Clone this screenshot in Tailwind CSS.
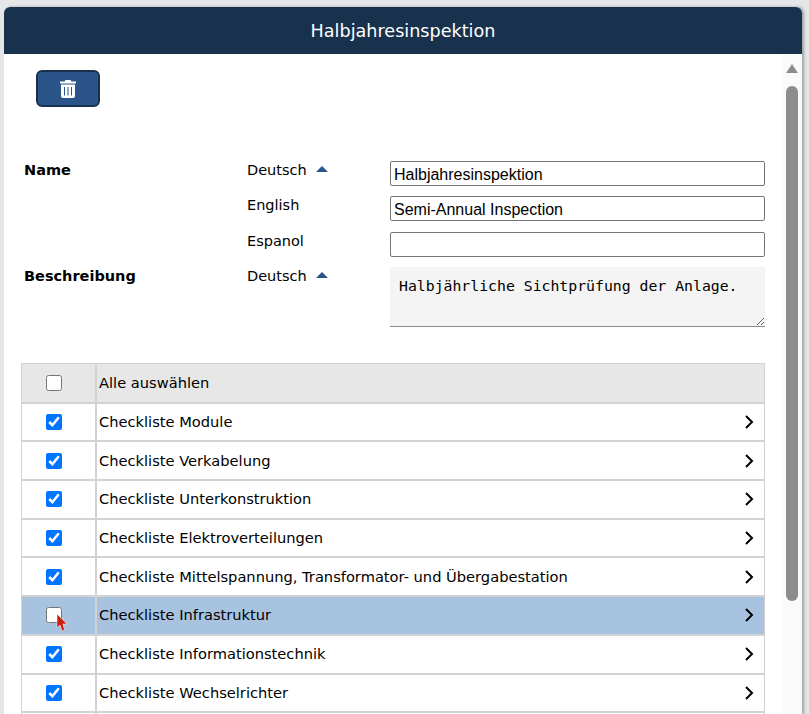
<!DOCTYPE html>
<html lang="en">
<head>
  <meta charset="UTF-8">
  <title>Halbjahresinspektion</title>
  <script src="https://cdn.jsdelivr.net/npm/@tailwindcss/browser@4"></script>
</head>
<body class="h-[714px] overflow-hidden bg-[#e4e6e8] font-['DejaVu_Sans',sans-serif] text-[14.500px] text-black">
  <div class="ml-[4px] mt-[7px] h-[707px] w-[798px] overflow-hidden rounded-t-[6px] bg-white shadow-[2px_0_3px_rgba(0,0,0,0.3)]">
    <div class="flex h-[47px] items-center justify-center pt-[2px] text-[17.600px] text-white bg-[#18324e]">Halbjahresinspektion</div>

    <div class="flex h-[660px]">
      <div class="w-[778px] overflow-hidden">
        <button class="ml-[32px] mt-[16px] flex h-[37px] w-[64px] items-center justify-center rounded-[6px] border-2 border-[#18324e] bg-[#2b5488]">
          <svg class="h-[18px] w-[16px]" viewBox="0 0 16 18" fill="#fff">
            <path d="M5.500 0h5l1 1.500h4.500v2h-16v-2h4.500z"/>
            <path fill-rule="evenodd" d="M1 4.500h14v11.500a2 2 0 0 1-2 2h-10a2 2 0 0 1-2-2zM4 7v8.500h1V7zM7.500 7v8.500h1V7zM11 7v8.500h1V7z"/>
          </svg>
        </button>

        <div class="ml-[20px] mt-[53px] w-[741px]">
          <div class="flex h-[35px]">
            <div class="w-[223px] font-bold">Name</div>
            <div class="flex w-[143px] items-start gap-[9px]">Deutsch <span class="mt-[6px] h-0 w-0 border-x-[6px] border-b-[6px] border-x-transparent border-b-[#2b5488]"></span></div>
            <input class="mt-[1px] h-[25px] w-[375px] rounded-[2px] border border-[#767676] px-[3px] pt-[2px] font-['Liberation_Sans',sans-serif] text-[16px]" value="Halbjahresinspektion">
          </div>
          <div class="flex h-[36px]">
            <div class="w-[223px]"></div>
            <div class="w-[143px]">English</div>
            <input class="mt-[1px] h-[25px] w-[375px] rounded-[2px] border border-[#767676] px-[3px] pt-[2px] font-['Liberation_Sans',sans-serif] text-[16px]" value="Semi-Annual Inspection">
          </div>
          <div class="flex h-[35px]">
            <div class="w-[223px]"></div>
            <div class="w-[143px]">Espanol</div>
            <input class="mt-[1px] h-[25px] w-[375px] rounded-[2px] border border-[#767676] px-[3px] pt-[2px] font-['Liberation_Sans',sans-serif] text-[16px]">
          </div>
          <div class="flex h-[97px]">
            <div class="w-[223px] font-bold">Beschreibung</div>
            <div class="flex w-[143px] items-start gap-[9px]">Deutsch <span class="mt-[6px] h-0 w-0 border-x-[6px] border-b-[6px] border-x-transparent border-b-[#2b5488]"></span></div>
            <textarea class="mt-[1px] h-[60px] w-[375px] border-b border-[#8a8a8a] bg-[#f4f4f4] px-[9px] pt-[8px] font-['DejaVu_Sans_Mono',monospace] text-[14.800px]">Halbjährliche Sichtprüfung der Anlage.</textarea>
          </div>

          <div class="-ml-[3px] w-[744px] border-x border-t border-[#d2d2d2] text-[14.650px]">
            <div class="flex h-[39.700px] border-b-2 border-[#d2d2d2] bg-[#e7e7e7] pt-[1px]">
              <div class="flex w-[75px] items-center border-r-2 border-[#d2d2d2] pl-[24px]"><input type="checkbox" class="h-[16px] w-[16px]"></div>
              <div class="flex flex-1 items-center pl-[2px]">Alle auswählen</div>
            </div>
            <div class="flex h-[38.700px] border-b-2 border-[#d2d2d2]">
              <div class="flex w-[75px] items-center border-r-2 border-[#d2d2d2] pl-[24px]"><input type="checkbox" checked class="h-[16px] w-[16px]"></div>
              <div class="flex flex-1 items-center justify-between pl-[2px] pr-[10px]">Checkliste Module
                <svg class="h-[14px] w-[9px]" viewBox="0 0 9 14" fill="none" stroke="#000" stroke-width="2"><path d="M1 1l6 6-6 6"/></svg>
              </div>
            </div>
            <div class="flex h-[38.700px] border-b-2 border-[#d2d2d2]">
              <div class="flex w-[75px] items-center border-r-2 border-[#d2d2d2] pl-[24px]"><input type="checkbox" checked class="h-[16px] w-[16px]"></div>
              <div class="flex flex-1 items-center justify-between pl-[2px] pr-[10px]">Checkliste Verkabelung
                <svg class="h-[14px] w-[9px]" viewBox="0 0 9 14" fill="none" stroke="#000" stroke-width="2"><path d="M1 1l6 6-6 6"/></svg>
              </div>
            </div>
            <div class="flex h-[38.700px] border-b-2 border-[#d2d2d2]">
              <div class="flex w-[75px] items-center border-r-2 border-[#d2d2d2] pl-[24px]"><input type="checkbox" checked class="h-[16px] w-[16px]"></div>
              <div class="flex flex-1 items-center justify-between pl-[2px] pr-[10px]">Checkliste Unterkonstruktion
                <svg class="h-[14px] w-[9px]" viewBox="0 0 9 14" fill="none" stroke="#000" stroke-width="2"><path d="M1 1l6 6-6 6"/></svg>
              </div>
            </div>
            <div class="flex h-[38.700px] border-b-2 border-[#d2d2d2]">
              <div class="flex w-[75px] items-center border-r-2 border-[#d2d2d2] pl-[24px]"><input type="checkbox" checked class="h-[16px] w-[16px]"></div>
              <div class="flex flex-1 items-center justify-between pl-[2px] pr-[10px]">Checkliste Elektroverteilungen
                <svg class="h-[14px] w-[9px]" viewBox="0 0 9 14" fill="none" stroke="#000" stroke-width="2"><path d="M1 1l6 6-6 6"/></svg>
              </div>
            </div>
            <div class="flex h-[38.700px] border-b-2 border-[#d2d2d2]">
              <div class="flex w-[75px] items-center border-r-2 border-[#d2d2d2] pl-[24px]"><input type="checkbox" checked class="h-[16px] w-[16px]"></div>
              <div class="flex flex-1 items-center justify-between pl-[2px] pr-[10px]">Checkliste Mittelspannung, Transformator- und Übergabestation
                <svg class="h-[14px] w-[9px]" viewBox="0 0 9 14" fill="none" stroke="#000" stroke-width="2"><path d="M1 1l6 6-6 6"/></svg>
              </div>
            </div>
            <div class="flex h-[38.700px] border-b-2 border-[#d2d2d2] bg-[#a8c3e0]">
              <div class="relative flex w-[75px] items-center border-r-2 border-[#d2d2d2] pl-[24px]">
                <input type="checkbox" class="h-[16px] w-[16px]">
                <!-- red mouse cursor from the recording -->
                <svg class="absolute left-[34px] top-[17px] h-[17px] w-[12px]" viewBox="0 0 12 17"><path d="M1 0l10 10H7l1.500 6-2.500 1-2-6-3 3z" fill="#cc1f0c" stroke="#fff" stroke-width="0.500"/></svg>
              </div>
              <div class="flex flex-1 items-center justify-between pl-[2px] pr-[10px]">Checkliste Infrastruktur
                <svg class="h-[14px] w-[9px]" viewBox="0 0 9 14" fill="none" stroke="#000" stroke-width="2"><path d="M1 1l6 6-6 6"/></svg>
              </div>
            </div>
            <div class="flex h-[38.700px] border-b-2 border-[#d2d2d2]">
              <div class="flex w-[75px] items-center border-r-2 border-[#d2d2d2] pl-[24px]"><input type="checkbox" checked class="h-[16px] w-[16px]"></div>
              <div class="flex flex-1 items-center justify-between pl-[2px] pr-[10px]">Checkliste Informationstechnik
                <svg class="h-[14px] w-[9px]" viewBox="0 0 9 14" fill="none" stroke="#000" stroke-width="2"><path d="M1 1l6 6-6 6"/></svg>
              </div>
            </div>
            <div class="flex h-[38.700px] border-b-2 border-[#d2d2d2]">
              <div class="flex w-[75px] items-center border-r-2 border-[#d2d2d2] pl-[24px]"><input type="checkbox" checked class="h-[16px] w-[16px]"></div>
              <div class="flex flex-1 items-center justify-between pl-[2px] pr-[10px]">Checkliste Wechselrichter
                <svg class="h-[14px] w-[9px]" viewBox="0 0 9 14" fill="none" stroke="#000" stroke-width="2"><path d="M1 1l6 6-6 6"/></svg>
              </div>
            </div>
            <div class="flex h-[38.700px]">
              <div class="w-[75px] border-r-2 border-[#d2d2d2]"></div>
            </div>
          </div>
        </div>
      </div>

      <!-- scrollbar -->
      <div class="flex w-[20px] flex-col items-center bg-[#fafafa] pt-[10px]">
        <span class="h-0 w-0 border-x-[6px] border-b-[9px] border-x-transparent border-b-[#8c8c8c]"></span>
        <div class="mt-[13px] h-[515px] w-[12px] rounded-full bg-[#8c8c8c]"></div>
      </div>
    </div>
  </div>
</body>
</html>
